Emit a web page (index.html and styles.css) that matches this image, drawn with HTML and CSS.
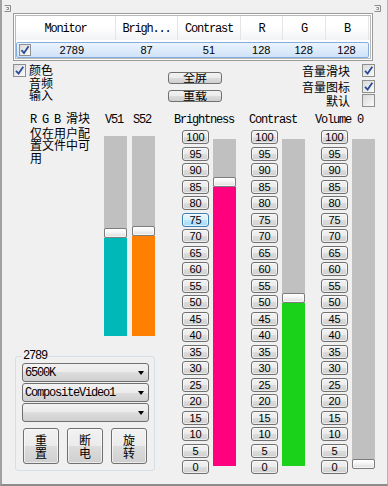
FILE: index.html
```html
<!DOCTYPE html>
<html>
<head>
<meta charset="utf-8">
<link rel="stylesheet" href="styles.css">
</head>
<body>
<div class="window">
  <svg class="corner tl" width="8" height="7" viewBox="0 0 8 7"><path d="M0.5 0.5H6.5V6.5H0.5M2.5 2.5H4.5V4.5H2.5" fill="none" stroke="#8c8c8c"/></svg>
  <svg class="corner tr" width="8" height="7" viewBox="0 0 8 7"><path d="M0.5 0.5H6.5V6.5H0.5M2.5 2.5H4.5V4.5H2.5" fill="none" stroke="#8c8c8c"/></svg>

  <div class="list">
    <div class="list-inner">
      <div class="hdr">
        <div class="hc c1 mono">Monitor</div>
        <div class="hc c2 mono">Brigh...</div>
        <div class="hc c3 mono">Contrast</div>
        <div class="hc c4 mono">R</div>
        <div class="hc c5 mono">G</div>
        <div class="hc c6 mono">B</div>
      </div>
      <div class="row">
        <div class="rc c1 first"><span class="cb sm"><svg width="10" height="10" viewBox="0 0 10 10"><path d="M1.5 5.2L4 8L8.6 1.3" fill="none" stroke="#2c4b98" stroke-width="1.8"/></svg></span><span class="rv">2789</span></div>
        <div class="rc c2">87</div>
        <div class="rc c3">51</div>
        <div class="rc c4">128</div>
        <div class="rc c5">128</div>
        <div class="rc c6">128</div>
      </div>
    </div>
  </div>

  <div class="options">
    <div class="opt-left">
      <span class="cb"><svg width="11" height="11" viewBox="0 0 11 11"><path d="M2 5.8L4.6 8.6L9.3 1.8" fill="none" stroke="#2c4b98" stroke-width="1.8"/></svg></span>
      <div class="stack">
        <span>颜色</span>
        <span>音频</span>
        <span>输入</span>
      </div>
    </div>
    <div class="opt-mid">
      <div class="tbtn"><span>全屏</span></div>
      <div class="tbtn"><span>重载</span></div>
    </div>
    <div class="opt-right">
      <div class="orow r1"><span class="olabel">音量滑块</span><span class="cb"><svg width="11" height="11" viewBox="0 0 11 11"><path d="M2 5.8L4.6 8.6L9.3 1.8" fill="none" stroke="#2c4b98" stroke-width="1.8"/></svg></span></div>
      <div class="orow r2"><span class="olabel">音量图标</span><span class="cb"><svg width="11" height="11" viewBox="0 0 11 11"><path d="M2 5.8L4.6 8.6L9.3 1.8" fill="none" stroke="#2c4b98" stroke-width="1.8"/></svg></span></div>
      <div class="orow r3"><span class="olabel">默认</span><span class="cb"></span></div>
    </div>
  </div>

  <div class="main">
    <div class="left">
      <div class="left-top">
        <div class="note">
          <span class="nowrap"><span class="mono">R G B </span>滑块</span>
          <span>仅在用户配</span>
          <span>置文件中可</span>
          <span>用</span>
        </div>
        <div class="vs v51">
          <div class="vlabel mono">V51</div>
          <div class="track short"><div class="rest"></div><div class="thumb"></div><div class="fill teal" style="height:98px"></div></div>
        </div>
        <div class="vs s52">
          <div class="vlabel mono">S52</div>
          <div class="track short"><div class="rest"></div><div class="thumb"></div><div class="fill orange" style="height:100px"></div></div>
        </div>
      </div>
      <fieldset class="group">
        <legend class="mono">2789</legend>
        <div class="combo"><span class="mono">6500K</span><i class="arrow"></i></div>
        <div class="combo"><span class="mono">CompositeVideo1</span><i class="arrow"></i></div>
        <div class="combo"><span></span><i class="arrow"></i></div>
        <div class="bigbtns">
          <div class="bigbtn">重置</div>
          <div class="bigbtn">断电</div>
          <div class="bigbtn">旋转</div>
        </div>
      </fieldset>
    </div>

    <div class="right">
      <div class="labels">
        <span class="lab l1 mono">Brightness</span>
        <span class="lab l2 mono">Contrast</span>
        <span class="lab l3 mono">Volume 0</span>
      </div>
      <div class="groups">
        <div class="sgroup">
          <div class="btns">
            <div class="nb">100</div><div class="nb">95</div><div class="nb">90</div><div class="nb">85</div><div class="nb">80</div><div class="nb focus">75</div><div class="nb">70</div><div class="nb">65</div><div class="nb">60</div><div class="nb">55</div><div class="nb">50</div><div class="nb">45</div><div class="nb">40</div><div class="nb">35</div><div class="nb">30</div><div class="nb">25</div><div class="nb">20</div><div class="nb">15</div><div class="nb">10</div><div class="nb">5</div><div class="nb">0</div>
          </div>
          <div class="track tall"><div class="rest"></div><div class="thumb"></div><div class="fill pink" style="height:279px"></div></div>
        </div>
        <div class="sgroup g2">
          <div class="btns">
            <div class="nb">100</div><div class="nb">95</div><div class="nb">90</div><div class="nb">85</div><div class="nb">80</div><div class="nb">75</div><div class="nb">70</div><div class="nb">65</div><div class="nb">60</div><div class="nb">55</div><div class="nb">50</div><div class="nb">45</div><div class="nb">40</div><div class="nb">35</div><div class="nb">30</div><div class="nb">25</div><div class="nb">20</div><div class="nb">15</div><div class="nb">10</div><div class="nb">5</div><div class="nb">0</div>
          </div>
          <div class="track tall"><div class="rest"></div><div class="thumb"></div><div class="fill green" style="height:163px"></div></div>
        </div>
        <div class="sgroup g3">
          <div class="btns">
            <div class="nb">100</div><div class="nb">95</div><div class="nb">90</div><div class="nb">85</div><div class="nb">80</div><div class="nb">75</div><div class="nb">70</div><div class="nb">65</div><div class="nb">60</div><div class="nb">55</div><div class="nb">50</div><div class="nb">45</div><div class="nb">40</div><div class="nb">35</div><div class="nb">30</div><div class="nb">25</div><div class="nb">20</div><div class="nb">15</div><div class="nb">10</div><div class="nb">5</div><div class="nb">0</div>
          </div>
          <div class="track tall"><div class="rest"></div><div class="thumb low"></div><div class="fill" style="height:0px"></div></div>
        </div>
      </div>
    </div>
  </div>
</div>
</body>
</html>
```
FILE: styles.css
```css
* { box-sizing: border-box; }
body {
  margin: 0;
  background: #f0f0f0;
  font-family: "Noto Sans CJK SC", sans-serif;
  font-size: 12px;
  color: #000;
}
.mono {
  font-family: "Liberation Mono", "Noto Sans CJK SC", monospace;
  font-size: 12px;
  letter-spacing: -1.2px;
}
.nowrap { white-space: nowrap; }
.window {
  position: relative;
  width: 388px;
  height: 486px;
  border-left: 2px solid #a0a0a0;
  border-right: 1px solid #b4b4b4;
  border-bottom: 2px solid #8c8c8c;
  padding-top: 13px;
  overflow: hidden;
}
.corner { position: absolute; top: 5px; }
.corner.tl { left: 2px; }
.corner.tr { right: 5px; }

/* list view */
.list {
  margin-left: 11px;
  width: 360px;
  height: 48px;
  border: 1px solid #9a9a9a;
  padding: 1px;
  background: #fff;
}
.list-inner {
  height: 100%;
  border: 1px solid #b9b9b9;
  background: #fff;
}
.hdr {
  display: flex;
  height: 24px;
  background: linear-gradient(#ffffff 0%, #ffffff 45%, #f2f3f5 100%);
}
.hc {
  line-height: 24px;
  padding-top: 1px;
  text-align: center;
  border-right: 1px solid #e4e5e7;
}
.c1 { width: 100px; }
.c2 { width: 62px; }
.c3 { width: 63px; }
.c4 { width: 42px; }
.c5 { width: 43px; }
.c6 { width: 43px; }
.row {
  display: flex;
  height: 16px;
  margin: 2px 1px 0 0;
  border: 1px solid #84acdd;
  border-radius: 2px;
  background: linear-gradient(#ecf4fd, #cfe2f9);
  font-family: "Liberation Sans", sans-serif;
  font-size: 11px;
}
.rc { text-align: center; line-height: 14px; }
.row .c1 { width: 99px; }
.rc.first { display: flex; align-items: center; padding-left: 2px; }
.rv { flex: 1; text-align: center; padding-right: 3px; }

/* checkbox */
.cb {
  display: flex;
  align-items: center;
  justify-content: center;
  width: 13px;
  height: 13px;
  border: 1px solid #8e8f8f;
  background: linear-gradient(135deg, #dadada, #fbfbfb);
  flex: none;
}
.cb.sm { width: 12px; height: 12px; }

/* options */
.options {
  display: flex;
  height: 53px;
}
.opt-left {
  width: 166px;
  display: flex;
  align-items: flex-start;
  gap: 3px;
  padding: 3px 0 0 11px;
}
.stack { display: flex; flex-direction: column; line-height: 12.5px; }
.opt-mid {
  width: 54px;
  display: flex;
  flex-direction: column;
  gap: 6px;
  padding-top: 11px;
}
.tbtn {
  height: 12px;
  border: 1px solid #707070;
  border-radius: 3px;
  background: linear-gradient(#f2f2f2 0%, #ebebeb 50%, #dddddd 50%, #cfcfcf 100%);
  overflow: hidden;
  text-align: center;
  line-height: 8px;
}
.opt-right {
  flex: 1;
  display: flex;
  flex-direction: column;
  padding-top: 3px;
  padding-right: 12px;
}
.orow {
  display: flex;
  justify-content: flex-end;
  align-items: center;
  gap: 12px;
  height: 13px;
}
.orow.r2 { margin-top: 3px; }
.orow.r3 { margin-top: 1px; }
.olabel { line-height: 12px; font-size: 12px; }

/* main */
.main { display: flex; }
.left { width: 168px; }
.left-top { display: flex; }
.note {
  width: 60px;
  margin-left: 28px;
  display: flex;
  flex-direction: column;
  line-height: 12.5px;
  margin-top: -2px;
}
.vs { width: 23px; }
.v51 { margin-left: 14px; }
.s52 { margin-left: 5px; }
.vlabel { height: 22px; line-height: 12px; padding-left: 1px; }

.track {
  width: 23px;
  background: #c0c0c0;
  display: flex;
  flex-direction: column;
}
.track.short { height: 200px; }
.track.tall { height: 327px; margin-top: 9px; }
.rest { flex: 1; }
.thumb {
  height: 10px;
  border: 1px solid #7c7c7c;
  border-radius: 2px;
  background: linear-gradient(#ffffff 0%, #f4f4f4 45%, #dcdcdc 100%);
  box-shadow: inset 0 0 0 1px rgba(255,255,255,0.7);
  flex: none;
}
.thumb.low { margin-bottom: -3px; }
.fill { flex: none; }
.teal { background: #00b8b8; }
.orange { background: #ff8000; }
.pink { background: #ff007f; }
.green { background: #19d219; }

/* group box */
.group {
  margin: 14px 0 0 13px;
  width: 140px;
  height: 121px;
  border: 1px solid #d5dfe5;
  border-radius: 3px;
  padding: 1px 0 0 6px;
}
.group legend {
  padding: 0 1px;
  margin-left: 0;
  line-height: 12px;
}
.combo {
  width: 127px;
  height: 19px;
  margin-bottom: 1px;
  border: 1px solid #707070;
  border-radius: 3px;
  background: linear-gradient(#f2f2f2 0%, #ebebeb 50%, #dddddd 50%, #cfcfcf 100%);
  display: flex;
  align-items: center;
  justify-content: space-between;
  padding: 0 4px 0 2px;
}
.arrow {
  width: 0;
  height: 0;
  border-left: 3.5px solid transparent;
  border-right: 3.5px solid transparent;
  border-top: 4px solid #000;
}
.bigbtns {
  display: flex;
  gap: 8px;
  margin: 6px 0 0 1px;
}
.bigbtn {
  width: 36px;
  height: 36px;
  border: 1px solid #707070;
  border-radius: 3px;
  background: linear-gradient(#f2f2f2 0%, #ebebeb 50%, #dddddd 50%, #cfcfcf 100%);
  box-shadow: inset 0 0 0 1px rgba(255,255,255,0.6);
  display: flex;
  align-items: center;
  justify-content: center;
  text-align: center;
  line-height: 13px;
  padding: 0 11px;
}

/* right sliders */
.right { flex: 1; }
.labels { display: flex; height: 16px; line-height: 12px; }
.lab.l1 { margin-left: 4px; width: 75px; }
.lab.l2 { width: 66px; }
.groups { display: flex; margin-left: 12px; }
.sgroup { display: flex; gap: 4px; }
.g2 { margin-left: 15px; }
.g3 { margin-left: 16px; }
.btns {
  width: 27px;
  height: 344px;
  display: flex;
  flex-direction: column;
  justify-content: space-between;
}
.nb {
  height: 14px;
  border: 1px solid #707070;
  border-radius: 3px;
  background: linear-gradient(#f2f2f2 0%, #ebebeb 50%, #dddddd 50%, #cfcfcf 100%);
  box-shadow: inset 0 0 0 1px rgba(255,255,255,0.6);
  font-family: "Liberation Sans", sans-serif;
  font-size: 11px;
  line-height: 12px;
  text-align: center;
}
.nb.focus {
  border-color: #3c7fb1;
  background: linear-gradient(#eaf6fd 0%, #d9f0fc 50%, #bee6fd 50%, #a7d9f5 100%);
}
```
